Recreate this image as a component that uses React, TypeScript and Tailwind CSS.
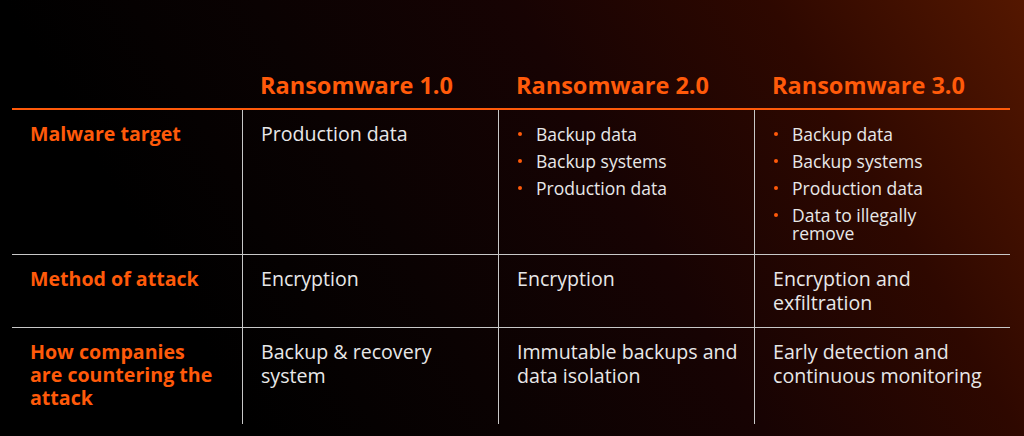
import React from "react";

type Cell = string | string[];

interface Row {
  label: string;
  cells: Cell[];
}

const headers = ["Ransomware 1.0", "Ransomware 2.0", "Ransomware 3.0"];

const rows: Row[] = [
  {
    label: "Malware target",
    cells: [
      "Production data",
      ["Backup data", "Backup systems", "Production data"],
      ["Backup data", "Backup systems", "Production data", "Data to illegally remove"],
    ],
  },
  {
    label: "Method of attack",
    cells: ["Encryption", "Encryption", "Encryption and exfiltration"],
  },
  {
    label: "How companies are countering the attack",
    cells: [
      "Backup & recovery system",
      "Immutable backups and data isolation",
      "Early detection and continuous monitoring",
    ],
  },
];

const BulletList = ({ items }: { items: string[] }) => (
  <ul className="mt-[3px] flex flex-col gap-[9px]">
    {items.map((item, i) => (
      <li key={i} className="flex items-start text-[17.5px] leading-[18px]">
        <span className="ml-[1px] mt-[7px] mr-[14px] h-[4px] w-[4px] shrink-0 rounded-full bg-[#ff5a0a]" />
        <span className="w-[160px]">{item}</span>
      </li>
    ))}
  </ul>
);

const App: React.FC = () => {
  return (
    <div
      className="h-[436px] w-[1024px] overflow-hidden bg-[linear-gradient(60deg,#000000_20%,#0a0202_40%,#170303_60%,#2e0800_80%,#541700_100%)] pt-[70px] text-[#e8e8e8]"
      style={{ fontFamily: '"Open Sans", "Noto Sans", sans-serif' }}
    >
      <div className="ml-[12px] w-[998px]">
        {/* header */}
        <div className="grid grid-cols-[230px_256px_256px_256px] border-b-2 border-[#ff5a0a] pb-[8px]">
          <div />
          {headers.map((h) => (
            <div key={h} className="pl-[18px] text-[23.5px] font-bold leading-[30px] text-[#ff5a0a]">
              {h}
            </div>
          ))}
        </div>

        {rows.map((row, ri) => {
          const last = ri === rows.length - 1;
          return (
            <div
              key={row.label}
              className={`grid grid-cols-[230px_256px_256px_256px] ${
                last ? "" : "border-b border-[#c8c8c8]"
              }`}
            >
              <div
                className={`pl-[18px] pr-[26px] pt-[12px] text-[19.6px] font-bold leading-[23px] text-[#ff5a0a] ${
                  last ? "pb-[15px]" : "pb-[12px]"
                }`}
              >
                {row.label}
              </div>
              {row.cells.map((cell, ci) => (
                <div
                  key={ci}
                  className="border-l border-[#c8c8c8] pb-[12px] pl-[18px] pr-[12px] pt-[12px] text-[19.6px] leading-[24px]"
                >
                  {Array.isArray(cell) ? <BulletList items={cell} /> : cell}
                </div>
              ))}
            </div>
          );
        })}
      </div>
    </div>
  );
};

export default App;
